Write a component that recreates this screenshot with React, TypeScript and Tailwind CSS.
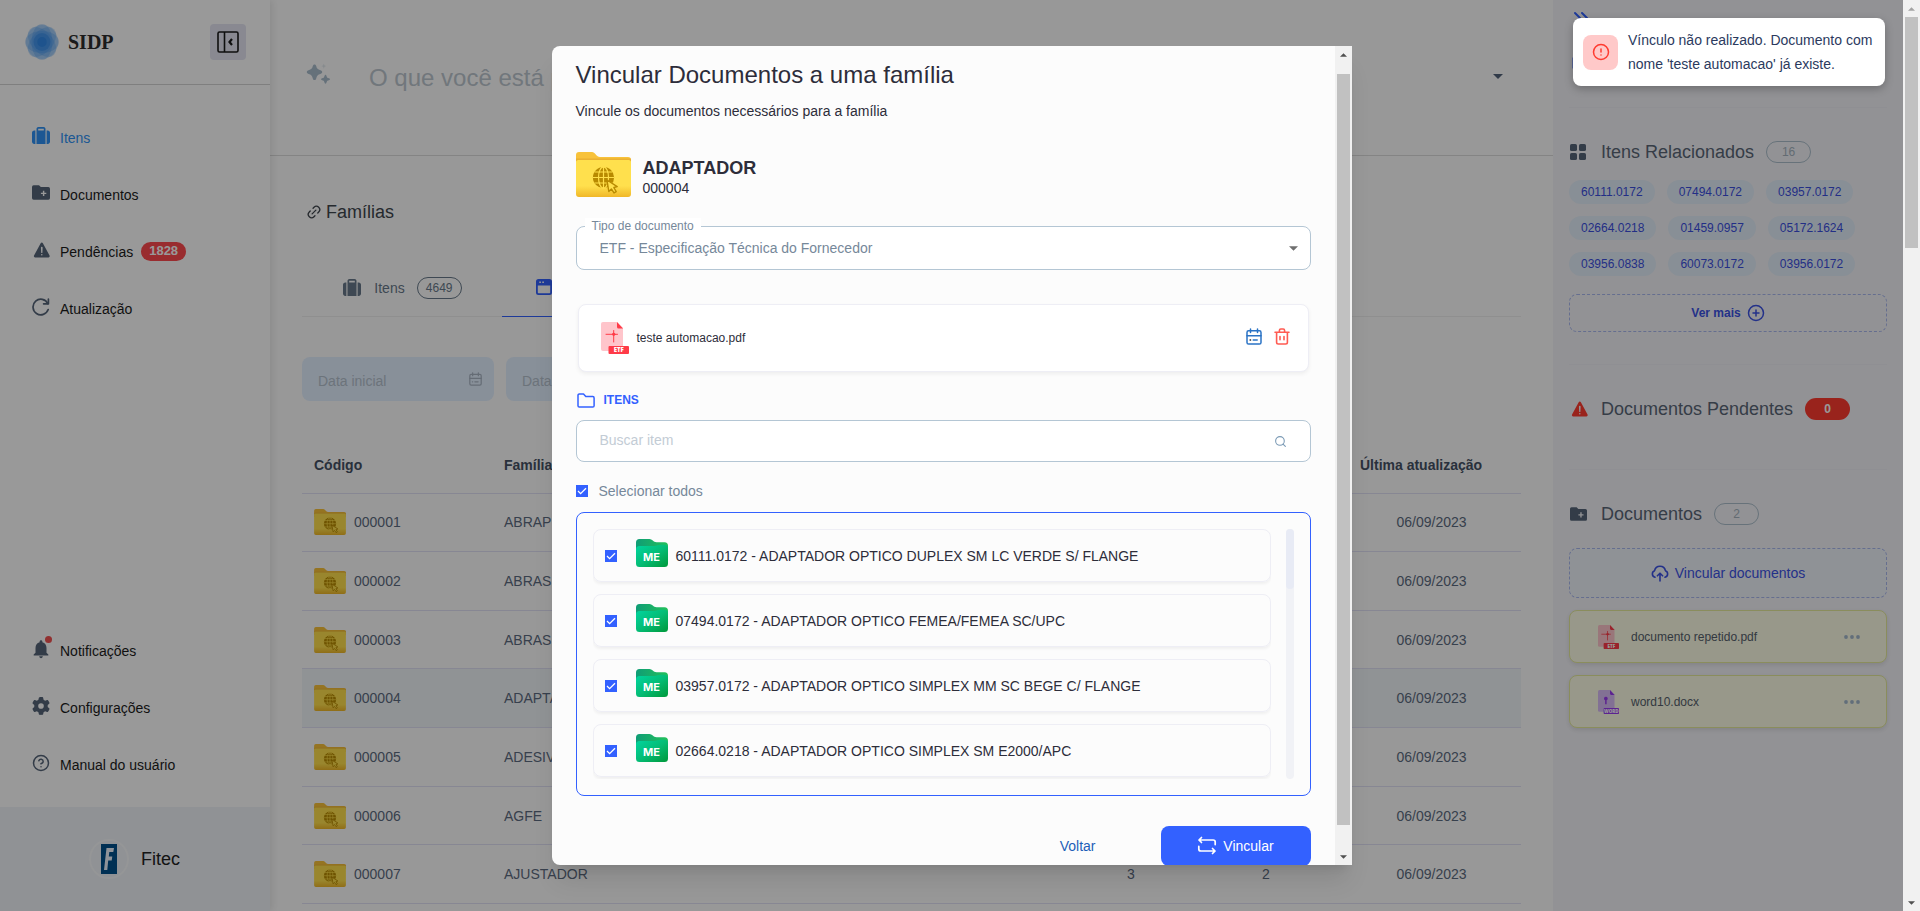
import { useState, type ReactNode } from "react";
import { ChevronsRight, Link2 } from "lucide-react";
import { FaGear, FaSuitcase } from "react-icons/fa6";
import { FiAlertCircle, FiHelpCircle, FiPlusCircle, FiSearch } from "react-icons/fi";
import { IoWarning } from "react-icons/io5";
import { MdNotifications } from "react-icons/md";

function LogoFlower() {
  const petals = [0, 45, 90, 135];
  return (
    <svg viewBox="0 0 36 36" className="h-9 w-[34px]" preserveAspectRatio="none" aria-hidden="true">
      <circle cx="18" cy="18" r="17" fill="#2f93ee" opacity="0.25" />
      {petals.map((angle) => (
        <ellipse key={angle} cx="18" cy="18" rx="18" ry="11" fill="#2f8df0" opacity="0.25" transform={`rotate(${angle} 18 18)`} />
      ))}
      <circle cx="18" cy="18" r="9" fill="#1f7fe8" opacity="0.4" />
      <circle cx="18" cy="18" r="5" fill="#1f7fe8" opacity="0.5" />
    </svg>
  );
}

function PanelIcon() {
  return (
    <svg viewBox="0 0 22 22" className="size-[22px]" fill="none" stroke="#1a1a1a" strokeWidth="1.6" aria-hidden="true">
      <rect x="1" y="1" width="20" height="20" rx="1.5" />
      <path d="M7.5 1v20" />
      <path d="M15 8l-2.5 3 2.5 3" strokeWidth="2.2" />
    </svg>
  );
}

function FolderPlusIcon({ className }: { className: string }) {
  return (
    <svg viewBox="0 0 20 16" className={className} aria-hidden="true">
      <path
        fill="currentColor"
        fillRule="evenodd"
        d="M1.8 0h6l2 2H18.200a1.800 1.800 0 0 1 1.800 1.800v10.400a1.800 1.800 0 0 1-1.800 1.800H1.800A1.800 1.800 0 0 1 0 14.200V1.800A1.800 1.800 0 0 1 1.800 0zM12.100 6v2.200H9.900v1.600h2.200V12h1.600V9.800h2.200V8.200h-2.200V6z"
      />
    </svg>
  );
}

function RefreshIcon() {
  return (
    <svg viewBox="0 0 18 18" className="size-[18px]" fill="none" stroke="currentColor" strokeWidth="1.700" strokeLinecap="round" strokeLinejoin="round" aria-hidden="true">
      <path d="M16.200 11.500A7.800 7.800 0 1 1 15.800 5.500" />
      <path d="M16.400 1.200v4.600h-4.800" />
    </svg>
  );
}

function UploadIcon() {
  return (
    <svg viewBox="0 0 18 17" className="h-[17px] w-[18px]" fill="none" stroke="currentColor" strokeWidth="1.600" strokeLinecap="round" strokeLinejoin="round" aria-hidden="true">
      <path d="M4 12.200A3.400 3.400 0 0 1 3.600 5.700a5.500 5.500 0 0 1 10.800 0A3.400 3.400 0 0 1 14 12.200" />
      <path d="M9 16V8.500M6.400 10.800L9 8.200l2.600 2.600" />
    </svg>
  );
}

function SparkleIcon() {
  return (
    <svg viewBox="0 0 24 24" className="size-6 text-[#a9bccc]" fill="currentColor" aria-hidden="true">
      <path d="M8.500 2.500c.9 0 1.500.7 1.700 1.500.6 2.600 1.600 3.500 4.200 4.200 1.100.3 1.800 1 1.800 1.900s-.7 1.600-1.800 1.900c-2.600.7-3.600 1.700-4.200 4.400-.2.900-.8 1.600-1.700 1.600s-1.500-.7-1.700-1.600c-.6-2.700-1.600-3.700-4.200-4.400C1.500 11.700.8 11 .8 10.100s.7-1.600 1.800-1.900C5.200 7.500 6.200 6.600 6.800 4c.2-.8.800-1.500 1.700-1.500z" />
      <path d="M19.500 13.500l1.100 2.700 2.600 1-2.600 1-1.100 2.700-1.100-2.700-2.600-1 2.600-1z" stroke="currentColor" strokeWidth="1.500" strokeLinejoin="round" />
      <path d="M17.800 1.500l.7 1.900 1.800.7-1.800.7-.7 1.900-.7-1.900-1.800-.7 1.800-.7z" opacity="0.350" />
    </svg>
  );
}

function CalendarIcon({ className, dot = "currentColor" }: { className: string; dot?: string }) {
  return (
    <svg viewBox="0 0 16 17" className={className} fill="none" stroke="currentColor" strokeWidth="1.5" strokeLinecap="round" aria-hidden="true">
      <rect x="1" y="2.800" width="14" height="13.200" rx="1.600" />
      <path d="M1 7.800h14M4.500 .9v3.600M11.500 .9v3.600M7.200 12h4" />
      <path d="M4.200 12h.3" stroke={dot} strokeWidth="1.600" />
    </svg>
  );
}

function TrashIcon() {
  return (
    <svg viewBox="0 0 16 17" className="h-[17px] w-4 text-[#ff5b52]" fill="none" stroke="currentColor" strokeWidth="1.600" strokeLinecap="round" strokeLinejoin="round" aria-hidden="true">
      <path d="M1 4.300h14M2.600 4.300v10a1.700 1.700 0 0 0 1.700 1.700h7.400a1.700 1.700 0 0 0 1.700-1.700v-10M5.400 4.300V2.400A1.400 1.400 0 0 1 6.800 1h2.400a1.400 1.400 0 0 1 1.400 1.400v1.900M6 8.500v3.300M10 8.500v3.300" />
    </svg>
  );
}

function FolderOutlineIcon() {
  return (
    <svg viewBox="0 0 18 15" className="h-[15px] w-[18px] text-[#3361ff]" fill="none" stroke="currentColor" strokeWidth="1.5" strokeLinejoin="round" aria-hidden="true">
      <path d="M2.300 1h4.200l2.300 2.600h7a1.300 1.300 0 0 1 1.300 1.300v7.800a1.300 1.300 0 0 1-1.300 1.300H2.300A1.300 1.300 0 0 1 1 12.700V2.300A1.300 1.300 0 0 1 2.300 1z" />
    </svg>
  );
}

function LoopIcon() {
  return (
    <svg viewBox="0 0 20 20" className="size-5" fill="none" stroke="currentColor" strokeWidth="1.700" strokeLinecap="round" strokeLinejoin="round" aria-hidden="true">
      <path d="M4.500 1.500L2 4l2.500 2.500M2 4h14.200a2 2 0 0 1 2 2v2.600" />
      <path d="M15.500 12.500L18 15l-2.500 2.500M18 15H3.800a2 2 0 0 1-2-2v-2.600" />
    </svg>
  );
}

function WindowIcon() {
  return (
    <svg viewBox="0 0 16 16" className="size-4" aria-hidden="true">
      <rect x="0.900" y="0.900" width="14.200" height="14.200" rx="1.600" fill="none" stroke="currentColor" strokeWidth="1.800" />
      <path d="M1 1h14v5.500H1z" fill="currentColor" />
      <path d="M3.300 3.200h1.600M6.300 3.200h1.600" stroke="#fff" strokeWidth="1.400" />
    </svg>
  );
}

function GridIcon() {
  return (
    <svg viewBox="0 0 16 16" className="size-4 text-[#566579]" fill="currentColor" aria-hidden="true">
      <rect width="7" height="7" rx="1.600" />
      <rect x="9" width="7" height="7" rx="1.600" />
      <rect y="9" width="7" height="7" rx="1.600" />
      <rect x="9" y="9" width="7" height="7" rx="1.600" />
    </svg>
  );
}

function YellowFolder({ className }: { className: string }) {
  return (
    <svg viewBox="0 0 55 45" className={className} aria-hidden="true">
      <defs>
        <linearGradient id="folder-front" x1="0" y1="0" x2="0" y2="1">
          <stop offset="0" stopColor="#ffe04d" />
          <stop offset="0.700" stopColor="#ffe04d" />
          <stop offset="1" stopColor="#f0b728" />
        </linearGradient>
      </defs>
      <path d="M0 3a3 3 0 0 1 3-3h13c3 0 4.500 5 8 5h28a3 3 0 0 1 3 3v6H0z" fill="#f8c23a" />
      <path d="M0 6.500h55V9H0z" fill="#e2a52c" opacity="0.600" />
      <path d="M0 10.500A2.500 2.500 0 0 1 2.500 8h50a2.500 2.500 0 0 1 2.500 2.500V42a3 3 0 0 1-3 3H3a3 3 0 0 1-3-3z" fill="url(#folder-front)" />
      <circle cx="27.500" cy="25.500" r="10.600" fill="#b88a00" />
      <g fill="none" stroke="#ffdf4a" strokeWidth="1.200">
        <ellipse cx="27.500" cy="25.500" rx="5" ry="10.600" />
        <path d="M27.500 15v21M17 25.500h21M18.500 20h18M18.500 31h18" />
      </g>
      <path d="M31 28l1.800 11.500 2.600-2.600 2.600 4 2.200-1.300-2.400-4.100 3.400-.9z" fill="#ffe04d" stroke="#b88a00" strokeWidth="1.400" strokeLinejoin="round" />
    </svg>
  );
}

function GreenFolder() {
  return (
    <svg viewBox="0 0 32 28" className="h-7 w-8" aria-hidden="true">
      <defs>
        <linearGradient id="me-front" x1="0" y1="0" x2="1" y2="1">
          <stop offset="0" stopColor="#00d5a0" />
          <stop offset="0.500" stopColor="#04bd76" />
          <stop offset="1" stopColor="#00983a" />
        </linearGradient>
        <linearGradient id="me-back" x1="0" y1="0" x2="1" y2="0">
          <stop offset="0" stopColor="#0f9d76" />
          <stop offset="1" stopColor="#22c05a" />
        </linearGradient>
      </defs>
      <path d="M0 3.500A3.500 3.500 0 0 1 3.500 0h10c2.500 0 4 3.200 7 3.200h8A3.500 3.500 0 0 1 32 6.700V14H0z" fill="url(#me-back)" />
      <path d="M0 10.500a3.500 3.500 0 0 1 3.500-3.500H18c3 0 4-1.200 7-1.200h3.500A3.500 3.500 0 0 1 32 9.300v15.200a3.500 3.500 0 0 1-3.500 3.500h-25A3.500 3.500 0 0 1 0 24.500z" fill="url(#me-front)" />
      <text x="15.500" y="21.500" textAnchor="middle" fill="#fff" className="font-['Inter',sans-serif] text-[11px] font-bold">
        ME
      </text>
    </svg>
  );
}

function FileIcon({ className, kind }: { className: string; kind: "ETF" | "WORD" }) {
  const strong = kind === "ETF" ? "#ff3b48" : "#9a3bf0";
  const soft = kind === "ETF" ? "#ffc5cb" : "#d9bdf7";
  return (
    <svg viewBox="0 0 28 32" className={className} aria-hidden="true">
      <path d="M2 0h14l6 6v21a2 2 0 0 1-2 2H2a2 2 0 0 1-2-2V2a2 2 0 0 1 2-2z" fill={soft} />
      <path d="M16 0l6 6.500h-4.500A1.500 1.500 0 0 1 16 5z" fill={strong} />
      {kind === "ETF" ? (
        <g stroke={strong} strokeWidth="1" strokeLinecap="round">
          <path d="M5 12.300h11.500M12.700 8.500v11.500" />
          <circle cx="12.700" cy="12.300" r="1.200" fill={strong} />
        </g>
      ) : (
        <path d="M10.500 9a2.500 2.500 0 0 1 1 4.800V19h-2v-5.200a2.500 2.500 0 0 1 1-4.800z" fill={strong} />
      )}
      <rect x="7.500" y="24" width="20.500" height="8" rx="1" fill={strong} />
      <text x="17.800" y="30.300" textAnchor="middle" fill="#fff" className="font-['Open_Sans',sans-serif] text-[6px] font-extrabold">
        {kind}
      </text>
    </svg>
  );
}

function Caret({ className }: { className: string }) {
  return (
    <svg viewBox="0 0 10 5" className={className} fill="currentColor" aria-hidden="true">
      <path d="M0 0h10L5 5z" />
    </svg>
  );
}

function CheckBox({ id, checked, onChange }: { id: string; checked: boolean; onChange: () => void }) {
  return (
    <span className="grid size-3 shrink-0">
      <input
        id={id}
        type="checkbox"
        checked={checked}
        onChange={onChange}
        className="size-3 appearance-none border border-[#3361ff] bg-white [grid-area:1/1] checked:bg-[#3361ff]"
      />
      {checked && (
        <svg viewBox="0 0 12 12" className="pointer-events-none size-3 [grid-area:1/1]" fill="none" stroke="#fff" strokeWidth="1.300" aria-hidden="true">
          <path d="M2 6l2.600 2.600L10 3.200" />
        </svg>
      )}
    </span>
  );
}

function ScrollTrack({ children, topActive }: { children: ReactNode; topActive: boolean }) {
  return (
    <div className="flex w-[17px] shrink-0 flex-col items-center bg-[#f1f1f1]" aria-hidden="true">
      <div className="flex h-[17px] items-center">
        <Caret className={topActive ? "h-1 w-[7px] rotate-180 text-[#505050]" : "h-1 w-[7px] rotate-180 text-[#a3a3a3]"} />
      </div>
      <div className="flex w-full flex-1 flex-col px-0.5">{children}</div>
      <div className="flex h-[17px] items-center">
        <Caret className="h-1 w-[7px] text-[#505050]" />
      </div>
    </div>
  );
}

function NavLink({ icon, label, active, badge }: { icon: ReactNode; label: string; active?: boolean; badge?: string }) {
  return (
    <a href="#" className={active ? "flex h-[57px] items-center pl-8 text-[#2f92f5]" : "flex h-[57px] items-center pl-8 text-[#1c1c1c]"}>
      <span className={active ? "mb-1 flex w-7 text-[#2f92f5]" : "mb-1 flex w-7 text-[#566579]"}>{icon}</span>
      <span>{label}</span>
      {badge && <span className="ml-2 flex h-[19px] items-center rounded-full bg-[#ff4a4f] px-2 text-[13px] font-bold text-white">{badge}</span>}
    </a>
  );
}

function Sidebar() {
  return (
    <aside className="z-10 flex w-[270px] shrink-0 flex-col bg-white shadow-[2px_0_8px_rgba(0,0,0,0.1)]">
      <div className="flex h-[85px] items-center border-b border-[#d4d4d4] pr-6 pl-[25px]">
        <LogoFlower />
        <span className="ml-[9px] font-['Liberation_Serif',serif] text-xl font-bold text-[#2e2e2e]">SIDP</span>
        <button type="button" aria-label="Recolher menu" className="ml-auto flex size-9 items-center justify-center rounded bg-[#e4e5f2]">
          <PanelIcon />
        </button>
      </div>
      <nav className="flex flex-1 flex-col pt-6 pb-3.5">
        <NavLink active icon={<FaSuitcase className="size-[18px]" />} label="Itens" />
        <NavLink icon={<FolderPlusIcon className="h-[15px] w-[18px]" />} label="Documentos" />
        <NavLink icon={<IoWarning className="size-5" />} label="Pendências" badge="1828" />
        <NavLink icon={<RefreshIcon />} label="Atualização" />
        <div className="mt-auto">
          <NavLink
            icon={
              <span className="relative -ml-0.5 flex">
                <MdNotifications className="size-[22px]" />
                <span className="absolute -top-0.5 right-0 size-[7px] rounded-full bg-[#f25050]" />
              </span>
            }
            label="Notificações"
          />
          <NavLink icon={<FaGear className="size-[18px]" />} label="Configurações" />
          <NavLink icon={<FiHelpCircle className="size-[18px]" />} label="Manual do usuário" />
        </div>
      </nav>
      <div className="flex h-[104px] items-center gap-3 bg-[#f0f3f9] pl-[89px] text-lg text-[#222]">
        <span className="flex size-10 items-center justify-center rounded-full border-2 border-[#f8fafc]">
          <svg viewBox="0 0 16 30" className="h-[30px] w-4" aria-hidden="true">
            <rect width="16" height="30" fill="#00508c" />
            <path d="M5.500 4h7.500l-.7 4h-4l-.5 4.500h3.500l-.6 4H7.200L6.300 26H3z" fill="#eef6ff" />
          </svg>
        </span>
        Fitec
      </div>
    </aside>
  );
}

const FAMILIES = [
  { code: "000001", name: "ABRAP" },
  { code: "000002", name: "ABRAS" },
  { code: "000003", name: "ABRAS" },
  { code: "000004", name: "ADAPTADOR" },
  { code: "000005", name: "ADESIVO" },
  { code: "000006", name: "AGFE" },
  { code: "000007", name: "AJUSTADOR", items: "3", docs: "2" },
];

function DateField({ label }: { label: string }) {
  return (
    <label className="flex h-11 w-48 items-center rounded-lg bg-[#e3f0ff] pr-3 pl-4">
      <input aria-label={label} placeholder={label} className="w-full min-w-0 pt-1 outline-none placeholder:text-[#b5c1ce]" />
      <CalendarIcon className="h-[14px] w-[13px] shrink-0 text-[#a9b5c4]" />
    </label>
  );
}

function MainArea() {
  return (
    <main className="min-w-0 flex-1 bg-[#fefefe]">
      <header className="flex h-[156px] items-center border-b border-[#dcdcdc] pr-[50px] pl-9">
        <span className="mb-2">
          <SparkleIcon />
        </span>
        <input aria-label="Pesquisa" placeholder="O que você está procurando?" className="ml-[39px] min-w-0 flex-1 text-2xl outline-none placeholder:text-[#bcc6cf]" />
        <Caret className="mb-0.5 h-[5px] w-[10px] text-[#52637a]" />
      </header>
      <section className="px-8 pt-[42px]">
        <h2 className="flex h-7 items-center gap-1 pl-1 text-lg text-[#40464e]">
          <Link2 className="size-4 -rotate-45" />
          Famílias
        </h2>
        <div className="mt-8 flex h-[59px] border-b border-[#eeeeee] text-[#68798a]">
          <button type="button" className="flex w-[200px] items-center justify-center pt-px pl-px">
            <FaSuitcase className="size-[18px]" />
            <span className="ml-[13px]">Itens</span>
            <span className="ml-3 flex h-[22px] w-[45px] items-center justify-center rounded-full border border-[#68798a] text-xs">4649</span>
          </button>
          <button type="button" className="-mb-px flex w-[200px] items-center border-b border-[#3361ff] pl-[34px] text-[#3361ff]">
            <WindowIcon />
            <span className="ml-[13px]">Famílias</span>
          </button>
        </div>
        <div className="mt-10 flex gap-3">
          <DateField label="Data inicial" />
          <DateField label="Data final" />
        </div>
        <table className="mt-9 h-[467px] w-full table-fixed border-collapse text-[#5c6b80]">
          <colgroup>
            <col className="w-[190px]" />
            <col />
            <col className="w-[134px]" />
            <col className="w-[136px]" />
            <col className="w-[187px]" />
          </colgroup>
          <thead>
            <tr className="h-14 border-b border-[#e2e2f6] text-left text-[#455164]">
              <th className="pl-3">Código</th>
              <th className="pl-3">Família</th>
              <th />
              <th />
              <th className="pl-[26px]">Última atualização</th>
            </tr>
          </thead>
          <tbody>
            {FAMILIES.map((family) => (
              <tr key={family.code} className={family.code === "000004" ? "border-b border-[#e2e2f6] bg-[#f1f5f9]" : "border-b border-[#e2e2f6]"}>
                <td className="pl-3">
                  <div className="flex items-center gap-2">
                    <YellowFolder className="h-[26px] w-8" />
                    {family.code}
                  </div>
                </td>
                <td className="pl-3">{family.name}</td>
                <td className="text-center">{family.items}</td>
                <td className="text-center">{family.docs}</td>
                <td className="pl-2 text-center">06/09/2023</td>
              </tr>
            ))}
          </tbody>
        </table>
      </section>
    </main>
  );
}

const RELATED = ["60111.0172", "07494.0172", "03957.0172", "02664.0218", "01459.0957", "05172.1624", "03956.0838", "60073.0172", "03956.0172"];

function PanelTitle({ icon, title, count, alert }: { icon: ReactNode; title: string; count: string; alert?: boolean }) {
  return (
    <h3 className="flex h-[22px] items-center text-lg text-[#5a6677]">
      <span className="flex w-8 pl-px">{icon}</span>
      {title}
      <span
        className={
          alert
            ? "ml-3 flex h-[22px] w-[45px] items-center justify-center rounded-full bg-[#ff3b30] text-xs font-bold text-white"
            : "ml-3 flex h-[22px] w-[45px] items-center justify-center rounded-full border border-[#acbfcc] text-xs text-[#a5b3bf]"
        }
      >
        {count}
      </span>
    </h3>
  );
}

function DocumentCard({ name, kind }: { name: string; kind: "ETF" | "WORD" }) {
  return (
    <li className="flex h-[53px] items-center rounded-lg border border-[#e6ec9c] bg-[#fdfde6] pr-[26px] pl-7 text-xs text-[#56606c] shadow-[0_2px_5px_rgba(0,0,0,0.1)]">
      <FileIcon kind={kind} className="h-6 w-[21px]" />
      <span className="ml-3">{name}</span>
      <button type="button" aria-label={`Opções de ${name}`} className="ml-auto text-[#a3b8cc]">
        <svg viewBox="0 0 16 4" className="h-1 w-4" fill="currentColor" aria-hidden="true">
          <circle cx="2" cy="2" r="1.900" />
          <circle cx="8" cy="2" r="1.900" />
          <circle cx="14" cy="2" r="1.900" />
        </svg>
      </button>
    </li>
  );
}

function RightPanel() {
  return (
    <aside className="w-[350px] shrink-0 bg-[#f4f4f9] px-4">
      <div className="flex h-[108px] flex-col items-start border-b border-[#efeff5] pt-1.5 text-[#3361ff]">
        <ChevronsRight className="size-6" />
        <span className="mt-[27px] ml-0.5">
          <FolderPlusIcon className="h-3 w-[18px]" />
        </span>
      </div>
      <section className="border-b border-[#efeff5] pt-[33px] pb-8">
        <PanelTitle icon={<GridIcon />} title="Itens Relacionados" count="16" />
        <ul className="mt-[17px] flex flex-wrap gap-3 text-xs text-[#3b4fe0]">
          {RELATED.map((code) => (
            <li key={code} className="flex h-6 items-center rounded-full bg-[#e3eefa] px-3">
              {code}
            </li>
          ))}
        </ul>
        <button type="button" className="mt-[18px] flex h-[38px] w-full items-center justify-center gap-1.5 rounded-lg border border-dashed border-[#a9b8ee] text-xs font-bold text-[#3b52e4]">
          Ver mais
          <FiPlusCircle className="size-[18px]" />
        </button>
      </section>
      <section className="border-b border-[#efeff5] pt-[33px] pb-[49px]">
        <PanelTitle alert icon={<IoWarning className="size-5 text-[#ff3b30]" />} title="Documentos Pendentes" count="0" />
      </section>
      <section className="pt-[33px]">
        <PanelTitle icon={<FolderPlusIcon className="h-[14px] w-[17px] text-[#566579]" />} title="Documentos" count="2" />
        <button type="button" className="mt-[23px] flex h-[50px] w-full items-center justify-center gap-1.5 rounded-lg border border-dashed border-[#a9b8ee] bg-[#eff3fb] text-[#3b52e4]">
          <UploadIcon />
          Vincular documentos
        </button>
        <ul className="mt-3 flex flex-col gap-3">
          <DocumentCard name="documento repetido.pdf" kind="ETF" />
          <DocumentCard name="word10.docx" kind="WORD" />
        </ul>
      </section>
    </aside>
  );
}

const ITEMS = [
  "60111.0172 - ADAPTADOR OPTICO DUPLEX SM LC VERDE S/ FLANGE",
  "07494.0172 - ADAPTADOR OPTICO FEMEA/FEMEA SC/UPC",
  "03957.0172 - ADAPTADOR OPTICO SIMPLEX MM SC BEGE C/ FLANGE",
  "02664.0218 - ADAPTADOR OPTICO SIMPLEX SM E2000/APC",
];

function LinkDialog() {
  const [selected, setSelected] = useState<boolean[]>(ITEMS.map(() => true));
  const all = selected.every(Boolean);
  return (
    <div role="dialog" aria-labelledby="dialog-title" className="flex w-full max-w-[800px] overflow-hidden rounded-l-lg bg-[#fcfcfc] shadow-xl">
      <div className="min-w-0 flex-1 overflow-hidden px-6 pt-[13px] text-[#2d2d3a]">
        <h1 id="dialog-title" className="text-2xl">
          Vincular Documentos a uma família
        </h1>
        <p className="mt-2.5">Vincule os documentos necessários para a família</p>
        <div className="mt-[31px] flex h-[46px] gap-3">
          <YellowFolder className="h-[45px] w-[55px]" />
          <div className="flex flex-col justify-end">
            <strong className="text-lg leading-5">ADAPTADOR</strong>
            <span className="leading-5">000004</span>
          </div>
        </div>
        <div className="relative mt-7 flex h-11 items-center rounded-lg border border-[#b4c6d4] bg-white">
          <label htmlFor="doc-type" className="absolute -top-[9px] left-2 bg-white px-[7px] text-xs text-[#76889a]">
            Tipo de documento
          </label>
          <select id="doc-type" className="h-full w-full appearance-none pr-10 pl-[23px] text-[#76889a] outline-none">
            <option>ETF - Especificação Técnica do Fornecedor</option>
          </select>
          <Caret className="pointer-events-none absolute right-3 h-[5px] w-[9px] text-[#6f6f6f]" />
        </div>
        <div className="mx-0.5 mt-[34px] flex h-[68px] items-center rounded-lg border border-[#eeeef5] bg-white pr-[18px] pl-[22px] shadow-[0_2px_4px_rgba(0,0,0,0.06)]">
          <FileIcon kind="ETF" className="h-8 w-7" />
          <span className="ml-2 text-xs">teste automacao.pdf</span>
          <button type="button" aria-label="Alterar validade" className="mb-1 ml-auto">
            <CalendarIcon className="h-[17px] w-4 text-[#2a73c5]" dot="#222222" />
          </button>
          <button type="button" aria-label="Remover documento" className="mb-1 ml-3">
            <TrashIcon />
          </button>
        </div>
        <h2 className="mt-[18px] flex h-5 items-center gap-[9px] pl-px text-xs font-bold text-[#3361ff]">
          <FolderOutlineIcon />
          ITENS
        </h2>
        <label className="mt-2.5 flex h-[42px] items-center rounded-lg border border-[#b4c6d4] bg-white pr-[23px] pl-[23px]">
          <input aria-label="Buscar item" placeholder="Buscar item" className="w-full min-w-0 pb-0.5 outline-none placeholder:text-[#c3ccd5]" />
          <FiSearch className="size-[13px] shrink-0 text-[#7b9ab5]" />
        </label>
        <div className="mt-[19px] flex h-5 items-center gap-[11px] text-[#76889a]">
          <CheckBox id="select-all" checked={all} onChange={() => setSelected(ITEMS.map(() => !all))} />
          <label htmlFor="select-all">Selecionar todos</label>
        </div>
        <div className="mt-[11px] flex gap-[15px] rounded-lg border border-[#3361ff] p-4">
          <ul className="flex h-[250px] min-w-0 flex-1 flex-col gap-3 overflow-hidden">
            {ITEMS.map((item, index) => (
              <li key={item} className="flex h-[53px] shrink-0 items-center rounded-lg border border-[#eeeef5] pl-[11px] shadow-[0_2px_3px_rgba(0,0,0,0.05)]">
                <CheckBox
                  id={`item-${index}`}
                  checked={selected[index]}
                  onChange={() => setSelected(selected.map((value, i) => (i === index ? !value : value)))}
                />
                <label htmlFor={`item-${index}`} className="ml-[19px] flex items-center gap-2">
                  <span className="mb-1.5">
                    <GreenFolder />
                  </span>
                  {item}
                </label>
              </li>
            ))}
          </ul>
          <div className="w-2 rounded-full bg-[#f1f2f6]" aria-hidden="true">
            <div className="h-[60px] rounded-full bg-[#e8ebf5]" />
          </div>
        </div>
        <div className="mt-[30px] flex justify-end">
          <button type="button" className="mr-[65px] h-10 text-[#1c5fb8]">
            Voltar
          </button>
          <button type="button" className="flex h-10 w-[150px] items-center justify-center gap-1.5 rounded-lg bg-[#3361ff] text-white">
            <LoopIcon />
            Vincular
          </button>
        </div>
      </div>
      <ScrollTrack topActive>
        <div className="grow-[11]" />
        <div className="grow-[751] bg-[#c1c1c1]" />
        <div className="grow-[23]" />
      </ScrollTrack>
    </div>
  );
}

function Toast() {
  return (
    <div role="alert" className="absolute top-[18px] right-[18px] flex h-[68px] w-[312px] items-center gap-2.5 rounded-lg bg-white px-2.5 leading-6 text-[#2b3a5e] shadow-[0_3px_8px_rgba(0,0,0,0.25)]">
      <span className="flex size-[35px] shrink-0 items-center justify-center rounded-lg bg-[#ffc9c9]">
        <FiAlertCircle className="size-[18px] text-[#ff3b30]" />
      </span>
      <p>Vínculo não realizado. Documento com nome 'teste automacao' já existe.</p>
    </div>
  );
}

export default function App() {
  return (
    <div className="flex h-screen overflow-hidden font-['Liberation_Sans',Arial,sans-serif] text-sm">
      <div className="relative flex min-w-0 flex-1 overflow-hidden">
        <Sidebar />
        <MainArea />
        <RightPanel />
        <div className="absolute inset-0 z-20 flex justify-center bg-black/40 py-[46px]">
          <LinkDialog />
        </div>
        <div className="absolute inset-x-0 top-0 z-30">
          <Toast />
        </div>
      </div>
      <ScrollTrack topActive={false}>
        <div className="grow-[231] bg-[#c1c1c1]" />
        <div className="grow-[646]" />
      </ScrollTrack>
    </div>
  );
}
